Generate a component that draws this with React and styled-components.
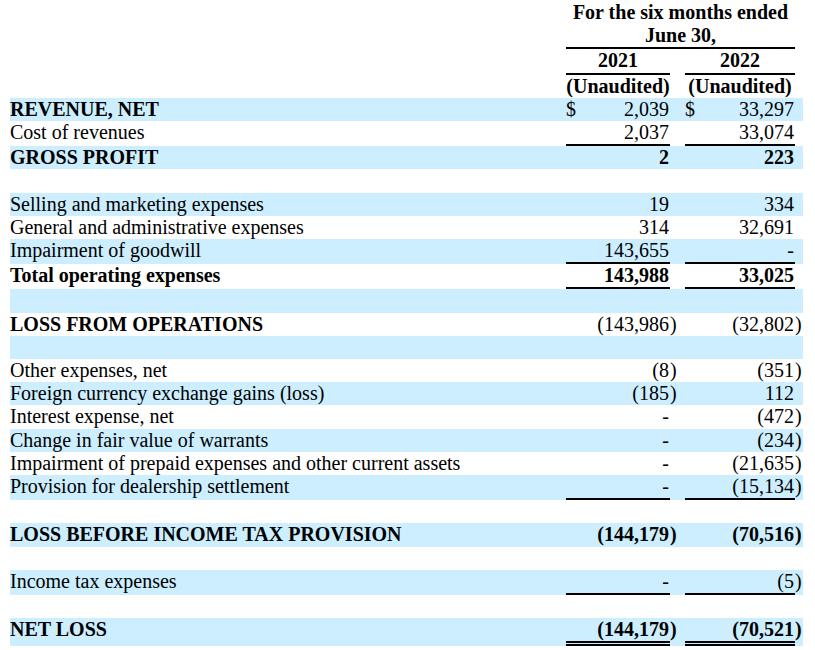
import React from 'react';
import styled, { createGlobalStyle } from 'styled-components';

const COLUMNS = '556px 104px 15px 110px 8px';
const SHADE = '#cceeff';

const GlobalStyle = createGlobalStyle`
  body {
    margin: 0;
    background: #fff;
  }
`;

const Table = styled.div`
  width: 793px;
  margin-left: 10px;
  padding-top: 1px;
  font-family: "Liberation Serif", "Times New Roman", serif;
  font-size: 20px;
  line-height: 23.2px;
  color: #000;
`;

const HeadRow = styled.div`
  display: grid;
  grid-template-columns: ${COLUMNS};
  font-weight: 700;
`;

const HeadCell = styled.div`
  grid-column: ${(p) => p.$span};
  text-align: center;
  white-space: nowrap;
  border-bottom: ${(p) => (p.$rule ? '2px solid #000' : 'none')};
`;

const Row = styled.div`
  display: grid;
  grid-template-columns: ${COLUMNS};
  background: ${(p) => (p.$shade ? SHADE : 'transparent')};
  min-height: 23.2px;
`;

const Label = styled.div`
  white-space: nowrap;
  font-weight: ${(p) => (p.$bold ? 700 : 400)};
`;

const Amount = styled.div`
  display: flex;
  justify-content: space-between;
  padding-right: 1px;
  white-space: nowrap;
  font-weight: ${(p) => (p.$bold ? 700 : 400)};
  border-bottom: ${(p) =>
    p.$rule === 'double' ? '5px double #000' : p.$rule === 'single' ? '2px solid #000' : 'none'};
`;

const Paren = styled.div`
  font-weight: ${(p) => (p.$bold ? 700 : 400)};
`;

const rows = [
  { label: 'REVENUE, NET', bold: true, dollar: true, a: '2,039', b: '33,297' },
  { label: 'Cost of revenues', a: '2,037', b: '33,074', rule: 'single' },
  { label: 'GROSS PROFIT', bold: true, numBold: true, a: '2', b: '223' },
  {},
  { label: 'Selling and marketing expenses', a: '19', b: '334' },
  { label: 'General and administrative expenses', a: '314', b: '32,691' },
  { label: 'Impairment of goodwill', a: '143,655', b: '-', rule: 'single' },
  { label: 'Total operating expenses', bold: true, numBold: true, a: '143,988', b: '33,025', rule: 'single' },
  {},
  { label: 'LOSS FROM OPERATIONS', bold: true, a: '(143,986)', b: '(32,802)' },
  {},
  { label: 'Other expenses, net', a: '(8)', b: '(351)' },
  { label: 'Foreign currency exchange gains (loss)', a: '(185)', b: '112' },
  { label: 'Interest expense, net', a: '-', b: '(472)' },
  { label: 'Change in fair value of warrants', a: '-', b: '(234)' },
  { label: 'Impairment of prepaid expenses and other current assets', a: '-', b: '(21,635)' },
  { label: 'Provision for dealership settlement', a: '-', b: '(15,134)', rule: 'single' },
  {},
  { label: 'LOSS BEFORE INCOME TAX PROVISION', bold: true, numBold: true, a: '(144,179)', b: '(70,516)' },
  {},
  { label: 'Income tax expenses', a: '-', b: '(5)', rule: 'single' },
  {},
  { label: 'NET LOSS', bold: true, numBold: true, a: '(144,179)', b: '(70,521)', rule: 'double' },
];

function split(value) {
  if (!value) return ['', ''];
  if (value.endsWith(')')) return [value.slice(0, -1), ')'];
  return [value, ''];
}

function AmountCells({ value, dollar, bold, rule }) {
  const [num, close] = split(value);
  return (
    <>
      <Amount $bold={bold} $rule={rule}>
        <span>{dollar ? '$' : ''}</span>
        <span>{num}</span>
      </Amount>
      <Paren $bold={bold}>{close}</Paren>
    </>
  );
}

export default function App() {
  return (
    <>
      <GlobalStyle />
      <Table>
        <HeadRow>
          <HeadCell $span="2 / 5" $rule>
            For the six months ended
            <br />
            June 30,
          </HeadCell>
        </HeadRow>
        <HeadRow>
          <HeadCell $span="2 / 3" $rule>2021</HeadCell>
          <HeadCell $span="4 / 5" $rule>2022</HeadCell>
        </HeadRow>
        <HeadRow>
          <HeadCell $span="2 / 3">(Unaudited)</HeadCell>
          <HeadCell $span="4 / 5">(Unaudited)</HeadCell>
        </HeadRow>
        {rows.map((r, i) => (
          <Row key={i} $shade={i % 2 === 0}>
            <Label $bold={r.bold}>{r.label}</Label>
            <AmountCells value={r.a} dollar={r.dollar} bold={r.numBold} rule={r.rule} />
            <AmountCells value={r.b} dollar={r.dollar} bold={r.numBold} rule={r.rule} />
          </Row>
        ))}
      </Table>
    </>
  );
}
